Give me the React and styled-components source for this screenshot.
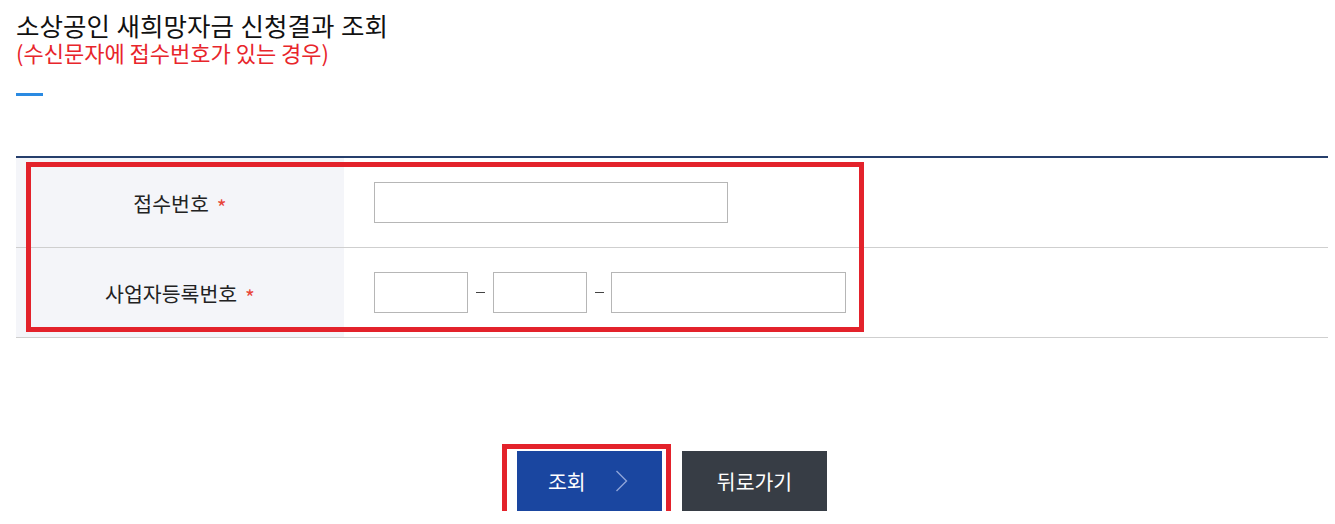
import React from "react";
import styled, { createGlobalStyle } from "styled-components";

const Global = createGlobalStyle`
  html, body { margin: 0; padding: 0; background: #fff; }
  body { font-family: "Noto Sans CJK KR", "Noto Sans", sans-serif; color: #222; }
  * { box-sizing: border-box; }
`;

const Page = styled.div`
  width: 1312px;
  margin-left: 16px;
`;

const Title = styled.h2`
  margin: 11px 0 0;
  font-size: 25.5px;
  line-height: 28px;
  font-weight: 400;
  word-spacing: 1px;
  color: #111;
`;

const Sub = styled.p`
  margin: 0;
  font-size: 22px;
  line-height: 26px;
  font-weight: 400;
  color: #e8252b;
`;

const Bar = styled.div`
  width: 27px;
  height: 3px;
  margin-top: 28px;
  background: #2a8ae2;
`;

const Table = styled.div`
  position: relative;
  margin-top: 60px;
  border-top: 2px solid #263f6c;
`;

const Row = styled.div`
  display: grid;
  grid-template-columns: 328px 1fr;
  height: 90px;
  border-bottom: 1px solid #cfcfcf;
`;

const Th = styled.div`
  background: #f4f5f9;
  display: flex;
  align-items: center;
  justify-content: center;
  font-size: 20.5px;
  color: #222;
`;

const Star = styled.span`
  color: #e8463a;
  margin-left: 8px;
  font-size: 21px;
  transform: translateY(4px);
`;

const Td = styled.div`
  display: flex;
  align-items: center;
  padding-left: 30px;
`;

const Input = styled.input`
  width: ${(p) => p.$w}px;
  height: 41px;
  border: 1px solid #b6b6b6;
  background: #fff;
  padding: 0 8px;
  font-size: 16px;
  outline: none;
`;

const Dash = styled.span`
  width: ${(p) => p.$w}px;
  display: flex;
  justify-content: center;

  &::before {
    content: "";
    width: 9px;
    height: 1px;
    background: #444;
  }
`;

const Mark = styled.div`
  position: absolute;
  border: 5px solid #e3222b;
  pointer-events: none;
`;

const Buttons = styled.div`
  display: flex;
  justify-content: center;
  gap: 20px;
  margin-top: 113px;
`;

const BtnWrap = styled.div`
  position: relative;
`;

const Btn = styled.button`
  height: 60px;
  width: 145px;
  border: 0;
  background: ${(p) => p.$bg};
  color: #fff;
  font-family: inherit;
  font-size: 20.5px;
  display: flex;
  align-items: center;
  justify-content: ${(p) => (p.$arrow ? "flex-start" : "center")};
  padding: ${(p) => (p.$arrow ? "0 0 0 31px" : "0")};
  cursor: pointer;
`;

const Chevron = styled.svg`
  margin-left: 29px;
`;

export default function App() {
  return (
    <>
      <Global />
      <Page>
        <Title>소상공인 새희망자금 신청결과 조회</Title>
        <Sub>(수신문자에 접수번호가 있는 경우)</Sub>
        <Bar />
        <Table>
          <Row>
            <Th>
              접수번호<Star>*</Star>
            </Th>
            <Td>
              <Input $w={354} />
            </Td>
          </Row>
          <Row>
            <Th>
              사업자등록번호<Star>*</Star>
            </Th>
            <Td>
              <Input $w={94} />
              <Dash $w={25} />
              <Input $w={94} />
              <Dash $w={24} />
              <Input $w={235} />
            </Td>
          </Row>
          <Mark style={{ left: 10, top: 4, width: 838, height: 170 }} />
        </Table>
        <Buttons>
          <BtnWrap>
            <Btn $bg="#1a46a0" $arrow>
              조회
              <Chevron width="13" height="22" viewBox="0 0 13 22">
                <polyline
                  points="1.5,1 11.5,11 1.5,21"
                  fill="none"
                  stroke="#8ea4d8"
                  strokeWidth="1.4"
                />
              </Chevron>
            </Btn>
            <Mark style={{ left: -15, top: -7, width: 169, height: 74 }} />
          </BtnWrap>
          <Btn $bg="#373d45">뒤로가기</Btn>
        </Buttons>
      </Page>
    </>
  );
}
